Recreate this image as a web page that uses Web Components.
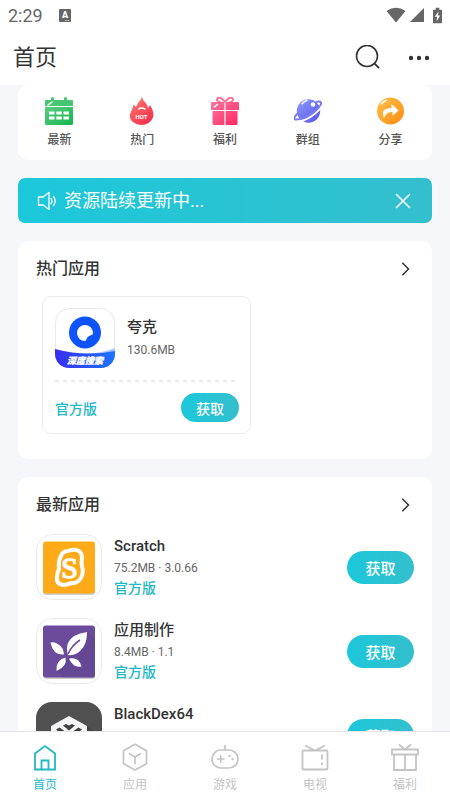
<!DOCTYPE html>
<html lang="zh-CN">
<head>
<meta charset="utf-8">
<meta name="viewport" content="width=device-width, initial-scale=1">
<title>首页</title>
<style>
    body {
        margin: 0;
        background: #f6f7fa;
        color: #333;
        font-family: Roboto, "Noto Sans CJK SC", sans-serif;
        --accent: #22b8c4;
        --accent-fill: linear-gradient(90deg, #1bc8da, #34bfcd);
        --muted: #666;
        --line: #ececec;
    }
</style>
</head>
<body>
<app-shell>
    <status-bar slot="top" time="2:29"></status-bar>
    <title-bar slot="top">首页</title-bar>

    <quick-nav>
        <quick-link icon="calendar">最新</quick-link>
        <quick-link icon="fire">热门</quick-link>
        <quick-link icon="present">福利</quick-link>
        <quick-link icon="planet">群组</quick-link>
        <quick-link icon="share">分享</quick-link>
    </quick-nav>
    <notice-bar>资源陆续更新中...</notice-bar>
    <app-section heading="热门应用">
        <app-card icon="quark" name="夸克" meta="130.6MB" tag="官方版"></app-card>
    </app-section>
    <app-section heading="最新应用">
        <app-row icon="scratch" name="Scratch" meta="75.2MB · 3.0.66" tag="官方版"></app-row>
        <app-row icon="leaf" name="应用制作" meta="8.4MB · 1.1" tag="官方版"></app-row>
        <app-row icon="blackdex" name="BlackDex64" meta="" tag=""></app-row>
    </app-section>

    <tab-bar slot="bottom">
        <tab-item icon="home" active>首页</tab-item>
        <tab-item icon="cube">应用</tab-item>
        <tab-item icon="game">游戏</tab-item>
        <tab-item icon="tv">电视</tab-item>
        <tab-item icon="gift">福利</tab-item>
    </tab-bar>
</app-shell>

<script>
// Icon artwork, by name: [viewBox, markup]
const ICONS = {
    keyboard: ["0 0 12 13", `
        <rect width="12" height="13" rx="1" fill="#666"/>
        <text x="6" y="9" font-family="Roboto" font-size="9" font-weight="900" fill="#fff" text-anchor="middle">A</text>
        <path d="M6 11.5h4" stroke="#ccc" stroke-width="1" stroke-dasharray="1 .5"/>`],
    wifi: ["0 0 20 16", `<path d="M.5 4Q10-2.5 19.5 4L10 15.500z" fill="#666"/>`],
    signal: ["0 0 14 14", `<path d="M14 0v14H0z" fill="#666"/>`],
    battery: ["0 0 10 17", `
        <path d="M3 0h4v2h2q1 0 1 1v13q0 1-1 1H1q-1 0-1-1V3q0-1 1-1h2z" fill="#666"/>
        <path d="M6 4L2 10h2.500L4 15l4-6.500H5.500z" fill="#fff"/>`],
    search: ["0 1 26 26", `
        <circle cx="12" cy="12" r="10.500" fill="none" stroke="#333" stroke-width="1.600"/>
        <path d="M19.300 19.300L24 24" stroke="#333" stroke-width="1.800"/>`],
    more: ["0 0 22 22", `<g fill="#333"><circle cx="3" cy="11" r="2.200"/><circle cx="11" cy="11" r="2.200"/><circle cx="19" cy="11" r="2.200"/></g>`],
    calendar: ["0 0 28 28", `
        <defs><linearGradient id="g" x1="0" y1="0" x2="1" y2="1"><stop stop-color="#5bcd83"/><stop offset="1" stop-color="#14b64e"/></linearGradient></defs>
        <path d="M1 3h5V1.500a1.500 1.500 0 0 1 3 0V3h10V1.500a1.500 1.500 0 0 1 3 0V3h5q1 0 1 1v5H0V4q0-1 1-1z" fill="#46c573"/>
        <path d="M0 10h28v16.500q0 1.500-1.500 1.500h-25Q0 28 0 26.500z" fill="url(#g)"/>
        <path d="M3 8l4-3" stroke="#fff" stroke-width="1.500" stroke-linecap="round"/>
        <path d="M4 16h5.500M11.300 16h5.500M18.500 16H24M4 21h5.500M11.300 21h5.500M18.500 21H24" stroke="#fff" stroke-width="3"/>`],
    fire: ["0 0 28 28", `
        <defs><linearGradient id="g" x1="0" y1="0" x2=".7" y2="1"><stop stop-color="#ff806f"/><stop offset="1" stop-color="#f52f4f"/></linearGradient></defs>
        <path d="M14 0q-1 3-4 6L8 10 5.500 7.500Q5 11 3.500 13.500-1 22 6.500 26q7 4 14 0 7-5 4-13-1-3-2.500-5l-2 3Q19 7 17 5 14.500 3 14 0z" fill="url(#g)"/>
        <path d="M10.500 12q3-2 6.500 0" fill="none" stroke="#fff" stroke-width="1.500" stroke-linecap="round"/>
        <text x="13.500" y="21.500" font-family="Roboto" font-size="6" font-weight="700" fill="#fff" text-anchor="middle">HOT</text>`],
    present: ["0 0 28 28", `
        <defs><linearGradient id="g" x1="0" y1="0" x2="1" y2="1"><stop stop-color="#ff79a0"/><stop offset="1" stop-color="#ff2461"/></linearGradient></defs>
        <path d="M14 5Q9-1 7 1 4 4 10 5.500M14 5q5-6 7-4 3 3-3 4.500" fill="none" stroke="#ff6690" stroke-width="1.800"/>
        <path d="M1 5h12.400v8H0V6q0-1 1-1zM14.600 5H27q1 0 1 1v7H14.600zM1.500 14h11.900v14H3q-1.500 0-1.500-1.500zM14.600 14h11.900v12.500Q26.500 28 25 28H14.600z" fill="url(#g)"/>
        <path d="M3.500 10l3-2.500" stroke="#fff" stroke-width="1.500" stroke-linecap="round"/>`],
    planet: ["0 0 28 28", `
        <defs><linearGradient id="g" x1="0" y1="0" x2="1" y2="1"><stop stop-color="#8d9bfa"/><stop offset="1" stop-color="#5753ed"/></linearGradient></defs>
        <circle cx="14.500" cy="14" r="11.700" fill="url(#g)"/>
        <path d="M4 16q-6 6-2.500 6.500Q8 23 18 16q10-7 9-10.500-1-1.500-5-.5" fill="none" stroke="#777cf4" stroke-width="2"/>
        <path d="M5 24.500Q13 23 20 17.500 26 13 28 9" fill="none" stroke="#fff" stroke-width="1.700"/>
        <circle cx="19" cy="7.500" r="2.200" fill="#fff"/>
        <path d="M8 7q2-3 5-3.500" fill="none" stroke="#fff" stroke-width="1.400" stroke-linecap="round"/>`],
    share: ["0 0 28 28", `
        <defs><linearGradient id="g" x1="0" y1="0" x2="1" y2="1"><stop stop-color="#ffc24f"/><stop offset="1" stop-color="#ff8b0d"/></linearGradient></defs>
        <circle cx="13.500" cy="14" r="13.500" fill="url(#g)"/>
        <path d="M14.500 7l7 6.500-6 5.500v-4q-6-1-8.500 6-4-10 7.500-10z" fill="#fff"/>
        <path d="M4.500 7Q6 4.500 9 3.500" fill="none" stroke="#fff" stroke-width="1.500" stroke-linecap="round"/>`],
    speaker: ["0 0 20 20", `
        <g fill="none" stroke="#fff" stroke-width="1.300" stroke-linejoin="round" stroke-linecap="round">
        <path d="M1.500 6H6l6-4.500v17L6 14H1.500z"/><path d="M14 7.500q2 2.500 0 5M16.500 5.500q3.500 4.500 0 9"/></g>`],
    close: ["0 0 16 16", `<path d="M1 1l14 14M15 1L1 15" stroke="#fff" stroke-width="1.500"/>`],
    chevron: ["0 0 8 14", `<path d="M.8.8L7 7 .8 13.200" fill="none" stroke="#333" stroke-width="1.500"/>`],
    quark: ["0 0 60 60", `
        <defs><linearGradient id="g"><stop stop-color="#3a2df0"/><stop offset="1" stop-color="#1a74ff"/></linearGradient>
        <clipPath id="c"><rect width="60" height="60" rx="14"/></clipPath></defs>
        <rect x=".5" y=".5" width="59" height="59" rx="14" fill="#fff" stroke="#e8e8e8"/>
        <g clip-path="url(#c)"><path d="M30 46q18-1 30-6v8H30z" fill="#a9c4fb"/><path d="M0 41q30 8 60 2v17H0z" fill="url(#g)"/></g>
        <circle cx="30" cy="24.500" r="16" fill="#0f53fb"/>
        <path d="M38 25a8 8 0 1 0-8 8q1 0 1.500-2 1-3 5-4 1.500 0 1.500-2z" fill="#fff"/>
        <text x="30" y="56" font-family="Noto Sans CJK SC" font-size="9" font-weight="900" font-style="italic" fill="#fff" stroke="#fff" stroke-width=".3" text-anchor="middle">深度搜索</text>`],
    scratch: ["0 0 66 66", `
        <rect x=".5" y=".5" width="65" height="65" rx="16" fill="#fff" stroke="#e9e9e9"/>
        <rect x="7" y="9" width="52" height="52" rx="3" fill="#ccc"/><rect x="7" y="7.500" width="52" height="52" rx="3" fill="#ffab19"/>
        <path d="M25 22q2-5 7-5 4-2 9-1 5 2 5 8-1 5 0 8 2 6-1 12-4 6-10 5-4 2-8 2-7-1-6-8 0-4 2-8-1-8 2-13z" fill="none" stroke="#fff" stroke-width="4" stroke-linejoin="round"/>
        <text x="33.500" y="44" font-family="Liberation Serif" font-size="30" fill="#fff" stroke="#fff" stroke-width="1.300" text-anchor="middle">S</text>`],
    leaf: ["0 0 66 66", `
        <rect x=".5" y=".5" width="65" height="65" rx="16" fill="#fff" stroke="#e9e9e9"/>
        <rect x="7" y="9" width="52" height="52" rx="3" fill="#ccc"/><rect x="7" y="7.500" width="52" height="52" rx="3" fill="#6a4b9c"/>
        <path d="M52 14l7 7v38.500H27L20 52l9-10 12-10z" fill="#5d408c" opacity=".4"/>
        <g fill="#fff"><path d="M51 14Q36 16 32 25q-2 6 0 12 8 1 13-5 6-6 6-18z"/><path d="M14.500 24.500q4-1 8 2 5 3 5.500 10-11 1-13.500-12z"/>
        <path d="M29.500 39.500q2 9-9 13.500-1-11 9-13.500zM33 40.500q10-2 12.500 8-8 2-12.500-8z"/></g>
        <path d="M32 36q4-9 12-14" fill="none" stroke="#6a4b9c" stroke-width="1.500"/>`],
    blackdex: ["0 0 66 66", `
        <rect width="66" height="66" rx="16" fill="#505050"/><path d="M51 24l15 12v30H33z" fill="#424242"/>
        <path d="M33 14l18 10v22L33 56 15 46V24z" fill="#f5f5f7"/>
        <path d="M27 23.500l3-1.500 3 1.500 3-1.500 3 1.500-6 5zM20 27.500l3.500-2 6.500 4.500-4 2.500zM46 27.500l-3.500-2-6.500 4.500 4 2.500zM33 31l5 3-5 4-5-4z" fill="#404040"/>`],
    home: ["0 0 28 28", `<g fill="none" stroke="currentColor" stroke-width="1.800"><path d="M4 10.500L14 3l10 7.500v16H4z"/><path d="M10.500 26.500v-9h7v9"/></g>`],
    cube: ["0 0 28 28", `<g fill="none" stroke="currentColor" stroke-width="1.700"><path d="M14 1.200l11.500 6.500v13L14 27 2.500 20.700v-13z"/><path d="M8 10.500l6 3.500 6-3.500M14 14v7"/></g>`],
    game: ["0 0 28 28", `
        <g fill="none" stroke="currentColor" stroke-width="1.700"><rect x="1" y="7" width="26" height="18" rx="9"/><path d="M14 7V2M6 16h7.500M9.700 12.300v7.500"/></g>
        <g fill="currentColor"><circle cx="18.500" cy="13" r="1.200"/><circle cx="21.500" cy="16" r="1.200"/></g>`],
    tv: ["0 0 28 28", `<g fill="none" stroke="currentColor" stroke-width="1.800"><path d="M2.500 7.500h23q1 0 1 1v17q0 1-1 1h-23q-1 0-1-1v-17q0-1 1-1zM4 2.500l10 5 10-5M21 11.500v5M21 19.500v2.500"/></g>`],
    gift: ["0 0 28 28", `<g fill="none" stroke="currentColor" stroke-width="1.800"><path d="M1 6.500h26v5H1zM3 11.500V27h22V11.500M14 11.500V27M8 1.500l6 5 6-5"/></g>`]
};

function svg(name, width, height = width) {
    return `<svg viewBox="${ICONS[name][0]}" width="${width}" height="${height}" aria-hidden="true">${ICONS[name][1]}</svg>`;
}

class AppShell extends HTMLElement {
    constructor() {
        super();
        this.attachShadow({ mode: "open" }).innerHTML = `
            <style>
                :host { display: flex; flex-direction: column; height: 100vh; }
                header { background: #fff; }
                main {
                    flex: 1;
                    min-height: 0;
                    overflow: hidden;
                    padding: 0 18px;
                }
                .feed { display: flex; flex-direction: column; gap: 18px; }
            </style>
            <header><slot name="top"></slot></header>
            <main><div class="feed"><slot></slot></div></main>
            <slot name="bottom"></slot>
        `;
    }
}

class StatusBar extends HTMLElement {
    connectedCallback() {
        this.attachShadow({ mode: "open" }).innerHTML = `
            <style>
                :host {
                    display: flex;
                    align-items: center;
                    height: 30px;
                    padding: 0 8px;
                    color: #666;
                    font-size: 18px;
                }
                .left { flex: 1; display: flex; align-items: center; gap: 16px; }
                .right { display: flex; align-items: center; gap: 4px; }
                .right svg:last-child { margin-left: 5px; }
                svg { display: block; }
            </style>
            <div class="left"><span>${this.getAttribute("time")}</span>${svg("keyboard", 12, 13)}</div>
            <div class="right">${svg("wifi", 20, 16)}${svg("signal", 14)}${svg("battery", 9, 17)}</div>
        `;
    }
}

class TitleBar extends HTMLElement {
    constructor() {
        super();
        this.attachShadow({ mode: "open" }).innerHTML = `
            <style>
                :host {
                    display: flex;
                    align-items: center;
                    height: 55px;
                    padding: 0 20px 0 13px;
                    gap: 27px;
                }
                h1 { flex: 1; margin: 0; font-size: 22px; font-weight: 400; line-height: 32px; }
                button { padding: 0; border: 0; background: none; }
                svg { display: block; }
            </style>
            <h1><slot></slot></h1>
            <button aria-label="搜索">${svg("search", 26)}</button>
            <button aria-label="更多">${svg("more", 22)}</button>
        `;
    }
}

class QuickNav extends HTMLElement {
    constructor() {
        super();
        this.attachShadow({ mode: "open" }).innerHTML = `
            <style>
                :host { display: block; background: #fff; border-radius: 10px; }
                nav { display: grid; grid-template-columns: repeat(5, 1fr); padding: 12px 0 11px; }
            </style>
            <nav><slot></slot></nav>
        `;
    }
}

class QuickLink extends HTMLElement {
    connectedCallback() {
        this.attachShadow({ mode: "open" }).innerHTML = `
            <style>
                a {
                    display: flex;
                    flex-direction: column;
                    align-items: center;
                    gap: 6px;
                    color: #555;
                    font-size: 12px;
                    font-weight: 500;
                    line-height: 18px;
                    text-decoration: none;
                }
                svg { display: block; }
            </style>
            <a href="#">${svg(this.getAttribute("icon"), 28)}<span><slot></slot></span></a>
        `;
    }
}

class NoticeBar extends HTMLElement {
    constructor() {
        super();
        this.attachShadow({ mode: "open" }).innerHTML = `
            <style>
                :host {
                    display: flex;
                    align-items: center;
                    gap: 7px;
                    height: 45px;
                    padding: 0 21px 0 19px;
                    border-radius: 7px;
                    background: var(--accent-fill);
                    color: #fff;
                    font-size: 18px;
                }
                span { flex: 1; line-height: 26px; }
                button { padding: 0; border: 0; background: none; }
                svg { display: block; }
            </style>
            ${svg("speaker", 20)}
            <span><slot></slot></span>
            <button aria-label="关闭">${svg("close", 16)}</button>
        `;
    }
}

class AppSection extends HTMLElement {
    connectedCallback() {
        this.attachShadow({ mode: "open" }).innerHTML = `
            <style>
                :host {
                    display: block;
                    padding: 16px 18px 25px;
                    border-radius: 10px;
                    background: #fff;
                }
                header {
                    display: flex;
                    align-items: center;
                    justify-content: space-between;
                    padding-right: 4px;
                    margin-bottom: 15px;
                }
                h2 { margin: 0; font-size: 16px; font-weight: 500; line-height: 24px; }
                a { display: block; }
                svg { display: block; }
            </style>
            <header>
                <h2>${this.getAttribute("heading")}</h2>
                <a href="#" aria-label="更多">${svg("chevron", 9, 14)}</a>
            </header>
            <slot></slot>
        `;
    }
}

class GetButton extends HTMLElement {
    constructor() {
        super();
        this.attachShadow({ mode: "open" }).innerHTML = `
            <style>
                :host { display: block; }
                button {
                    display: block;
                    width: 67px;
                    height: 33px;
                    padding: 0;
                    border: 0;
                    border-radius: 17px;
                    background: var(--accent-fill);
                    color: #fff;
                    font: inherit;
                    font-size: 15px;
                    font-weight: 500;
                }
                :host([small]) button { width: 58px; height: 29px; font-size: 14px; }
            </style>
            <button><slot></slot></button>
        `;
    }
}

class AppCard extends HTMLElement {
    connectedCallback() {
        this.attachShadow({ mode: "open" }).innerHTML = `
            <style>
                :host {
                    display: block;
                    box-sizing: border-box;
                    width: 209px;
                    margin-left: 6px;
                    padding: 11px 11px 11px 12px;
                    border: 1px solid var(--line);
                    border-radius: 9px;
                }
                .head { display: flex; align-items: center; gap: 12px; }
                .head svg { display: block; }
                h3 { margin: 0; font-size: 15px; font-weight: 500; line-height: 24px; }
                p { margin: 0; color: var(--muted); font-size: 12px; line-height: 22px; }
                hr {
                    height: 2px;
                    margin: 12px 0 11px;
                    border: 0;
                    background: repeating-linear-gradient(90deg, #e8e8e8 0 4px, transparent 4px 8px);
                }
                .foot { display: flex; align-items: center; justify-content: space-between; }
                .tag { color: var(--accent); font-size: 14px; font-weight: 500; }
            </style>
            <div class="head">
                ${svg(this.getAttribute("icon"), 60)}
                <div><h3>${this.getAttribute("name")}</h3><p>${this.getAttribute("meta")}</p></div>
            </div>
            <hr>
            <div class="foot">
                <span class="tag">${this.getAttribute("tag")}</span>
                <get-button small>获取</get-button>
            </div>
        `;
    }
}

class AppRow extends HTMLElement {
    connectedCallback() {
        this.attachShadow({ mode: "open" }).innerHTML = `
            <style>
                :host {
                    display: flex;
                    align-items: center;
                    gap: 12px;
                    padding: 2px 0;
                    margin-bottom: 14px;
                }
                svg { display: block; }
                .info { flex: 1; align-self: flex-start; }
                h3 { margin: 0; font-size: 15px; font-weight: 500; line-height: 24px; }
                p { margin: 0; color: var(--muted); font-size: 12px; line-height: 20px; }
                .tag { color: var(--accent); font-size: 14px; font-weight: 500; }
            </style>
            ${svg(this.getAttribute("icon"), 66)}
            <div class="info">
                <h3>${this.getAttribute("name")}</h3>
                <p>${this.getAttribute("meta")}</p>
                <p class="tag">${this.getAttribute("tag")}</p>
            </div>
            <get-button>获取</get-button>
        `;
    }
}

class TabBar extends HTMLElement {
    constructor() {
        super();
        this.attachShadow({ mode: "open" }).innerHTML = `
            <style>
                :host { display: block; background: #fff; border-top: 1px solid #e6e6e6; }
                nav { display: grid; grid-template-columns: repeat(5, 1fr); padding: 11px 0 7px; }
            </style>
            <nav><slot></slot></nav>
        `;
    }
}

class TabItem extends HTMLElement {
    connectedCallback() {
        this.attachShadow({ mode: "open" }).innerHTML = `
            <style>
                a {
                    display: flex;
                    flex-direction: column;
                    align-items: center;
                    gap: 5px;
                    color: #c4c4c4;
                    font-size: 12px;
                    line-height: 18px;
                    text-decoration: none;
                }
                :host([active]) a { color: var(--accent); }
                svg { display: block; }
            </style>
            <a href="#">${svg(this.getAttribute("icon"), 28)}<span><slot></slot></span></a>
        `;
    }
}

customElements.define("app-shell", AppShell);
customElements.define("status-bar", StatusBar);
customElements.define("title-bar", TitleBar);
customElements.define("quick-nav", QuickNav);
customElements.define("quick-link", QuickLink);
customElements.define("notice-bar", NoticeBar);
customElements.define("app-section", AppSection);
customElements.define("get-button", GetButton);
customElements.define("app-card", AppCard);
customElements.define("app-row", AppRow);
customElements.define("tab-bar", TabBar);
customElements.define("tab-item", TabItem);
</script>
</body>
</html>
